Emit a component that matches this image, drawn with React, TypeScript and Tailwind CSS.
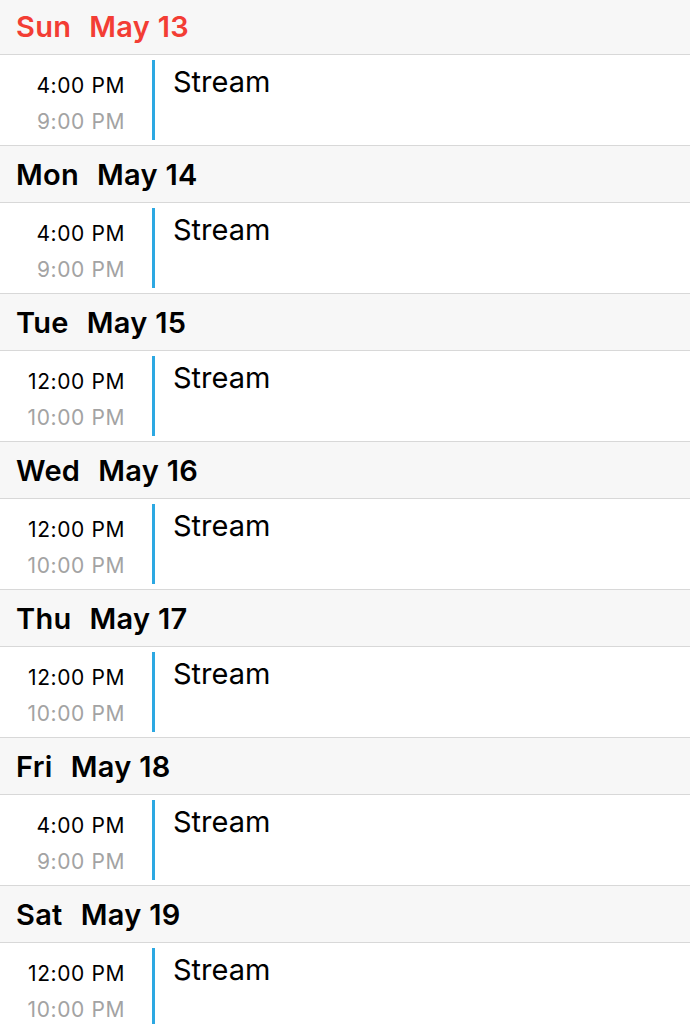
const DAYS = [
  { day: "Sun", date: "May 13", start: "4:00 PM", end: "9:00 PM", today: true },
  { day: "Mon", date: "May 14", start: "4:00 PM", end: "9:00 PM" },
  { day: "Tue", date: "May 15", start: "12:00 PM", end: "10:00 PM" },
  { day: "Wed", date: "May 16", start: "12:00 PM", end: "10:00 PM" },
  { day: "Thu", date: "May 17", start: "12:00 PM", end: "10:00 PM" },
  { day: "Fri", date: "May 18", start: "4:00 PM", end: "9:00 PM" },
  { day: "Sat", date: "May 19", start: "12:00 PM", end: "10:00 PM" },
];

export default function App() {
  return (
    <div
      className="h-[1024px] w-[690px] overflow-hidden bg-white"
      style={{ fontFamily: "Inter, 'Liberation Sans', sans-serif" }}
    >
      <div className="-mt-[3px]">
        {DAYS.map((d) => (
          <div key={d.day}>
            {/* day header */}
            <div
              className={`flex h-[58px] items-center border-y border-[#d8d8d8] bg-[#f7f7f7] pl-[16px] pt-[2px] text-[29px] font-semibold tracking-[0.3px] ${
                d.today ? "text-[#f33d34]" : "text-black"
              }`}
            >
              <span>{d.day}</span>
              <span className="ml-[18px]">{d.date}</span>
            </div>

            {/* event row */}
            <div className="flex h-[90px]">
              <div className="flex w-[125px] flex-col items-end pt-[13px] text-[21px] leading-[36px] tracking-[0.6px]">
                <span className="text-black">{d.start}</span>
                <span className="text-[#a3a3a3]">{d.end}</span>
              </div>
              <div className="ml-[27px] mt-[5px] h-[80px] w-[3px] bg-[#2ca8e2]" />
              <div className="ml-[18px] pt-[9px] text-[29px] leading-[36px] text-black">
                Stream
              </div>
            </div>
          </div>
        ))}
      </div>
    </div>
  );
}
